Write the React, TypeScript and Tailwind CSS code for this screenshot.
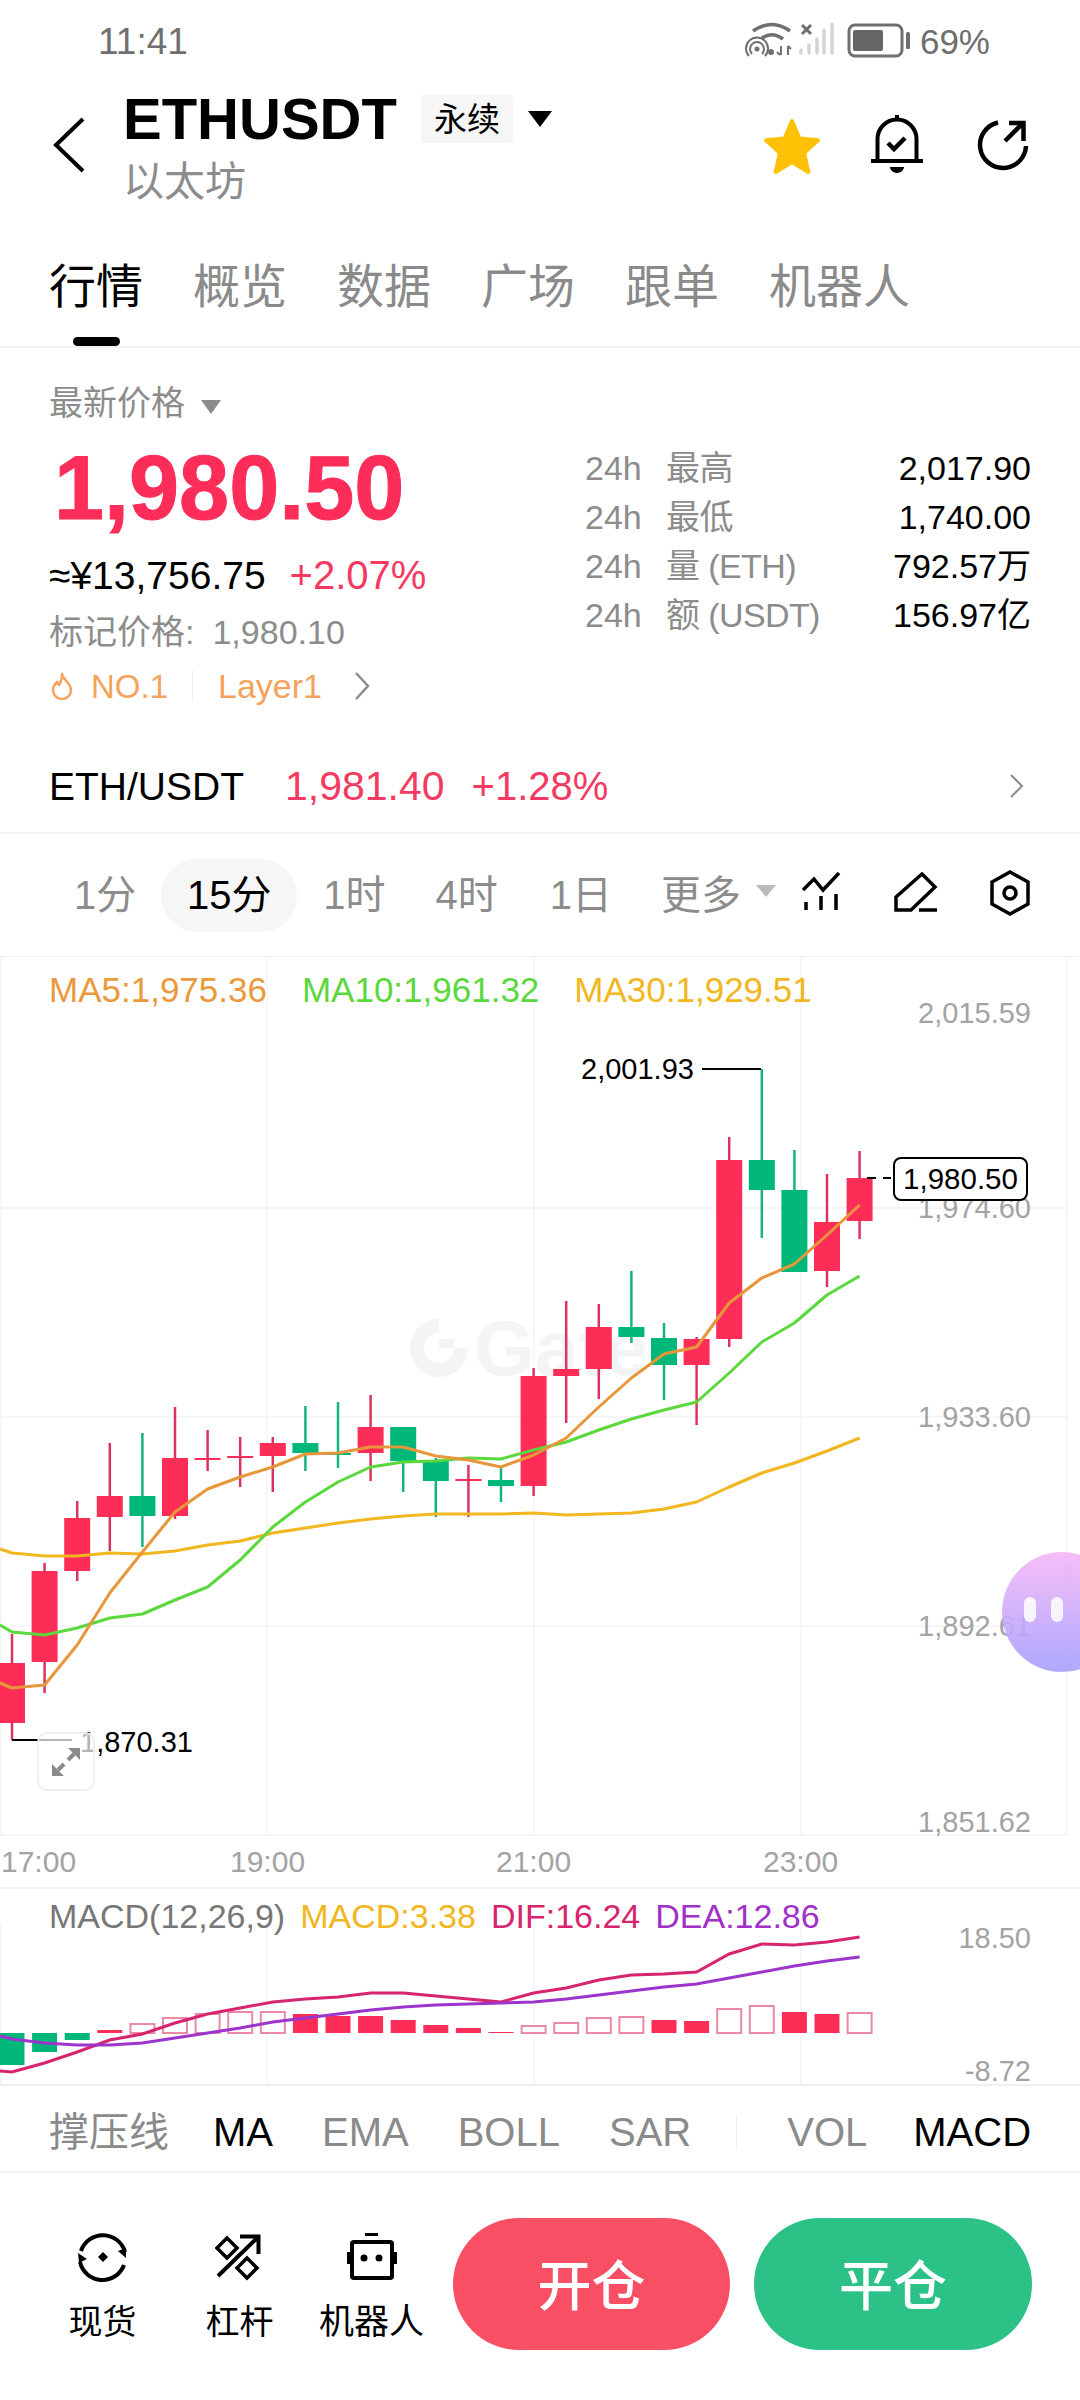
const candles: [number, number, number, number, "r" | "g"][] = [
  [1634, 1663, 1723, 1740, "r"],
  [1563, 1571, 1662, 1693, "r"],
  [1501, 1518, 1571, 1581, "r"],
  [1443, 1496, 1517, 1551, "r"],
  [1433, 1496, 1516, 1547, "g"],
  [1407, 1458, 1516, 1519, "r"],
  [1430, 1458, 1460, 1471, "r"],
  [1437, 1456, 1458, 1487, "r"],
  [1437, 1443, 1456, 1492, "r"],
  [1406, 1443, 1453, 1471, "g"],
  [1402, 1453, 1455, 1468, "g"],
  [1395, 1427, 1453, 1481, "r"],
  [1427, 1427, 1461, 1492, "g"],
  [1458, 1461, 1481, 1517, "g"],
  [1465, 1479, 1481, 1517, "r"],
  [1468, 1480, 1486, 1502, "g"],
  [1368, 1376, 1486, 1496, "r"],
  [1301, 1369, 1376, 1423, "r"],
  [1304, 1327, 1369, 1399, "r"],
  [1271, 1327, 1337, 1343, "g"],
  [1323, 1338, 1365, 1400, "g"],
  [1337, 1339, 1365, 1425, "r"],
  [1137, 1160, 1339, 1347, "r"],
  [1069, 1160, 1190, 1238, "g"],
  [1150, 1190, 1272, 1272, "g"],
  [1174, 1222, 1271, 1287, "r"],
  [1151, 1178, 1221, 1239, "r"],
];

const ma5 = [1688, 1685, 1645, 1593, 1552, 1512, 1489, 1477, 1467, 1454, 1453, 1447, 1447, 1456, 1460, 1467, 1455, 1438, 1407, 1378, 1354, 1347, 1303, 1278, 1264, 1235, 1205];
const ma10 = [1632, 1635, 1628, 1618, 1614, 1600, 1587, 1560, 1527, 1502, 1482, 1467, 1462, 1461, 1458, 1459, 1450, 1442, 1430, 1419, 1410, 1402, 1373, 1342, 1323, 1295, 1276];
const ma30 = [1553, 1556, 1556, 1553, 1554, 1551, 1545, 1541, 1533, 1528, 1523, 1519, 1516, 1514, 1514, 1514, 1513, 1515, 1514, 1513, 1509, 1502, 1487, 1473, 1463, 1451, 1438];

// tops in page pixels, bottom is the zero line
const macdBars: [number, "g" | "f" | "h"][] = [
  [2065, "g"], [2052, "g"], [2040, "g"], [2030, "f"], [2024, "h"], [2018, "h"], [2014, "h"], [2012, "h"], [2012, "h"],
  [2014, "f"], [2016, "f"], [2016, "f"], [2020, "f"], [2025, "f"], [2028, "f"], [2032, "f"], [2026, "h"], [2023, "h"],
  [2018, "h"], [2017, "h"], [2020, "f"], [2021, "f"], [2009, "h"], [2006, "h"], [2012, "f"], [2014, "f"], [2013, "h"],
];
const dif = [2072, 2063, 2052, 2040, 2034, 2023, 2014, 2008, 2002, 1999, 1997, 1993, 1993, 1996, 1999, 2002, 1993, 1988, 1980, 1975, 1974, 1972, 1954, 1944, 1945, 1942, 1937];
const dea = [2039, 2043, 2045, 2045, 2043, 2038, 2033, 2028, 2022, 2018, 2014, 2010, 2007, 2005, 2004, 2003, 2002, 1999, 1995, 1991, 1987, 1984, 1978, 1972, 1966, 1961, 1957];

const cx = (i: number) => 12 + 32.6 * i;
const toPoints = (ys: number[]) => ys.map((y, i) => `${cx(i)},${y}`).join(" ");

const tabs = ["概览", "数据", "广场", "跟单", "机器人"];
const stats = [
  { label: "最高", value: "2,017.90" },
  { label: "最低", value: "1,740.00" },
  { label: "量 (ETH)", value: "792.57万" },
  { label: "额 (USDT)", value: "156.97亿" },
];

function StatusBar() {
  return (
    <div className="flex h-[82px] items-center pl-[98px] pr-[90px] text-[#6f6f6f]">
      <span className="text-[37px] leading-none">11:41</span>
      <svg width="180" height="50" viewBox="0 0 180 50" className="ml-auto" fill="none">
        <path d="M14 15Q33 2 51 15" stroke="#6f6f6f" strokeWidth="3.5" />
        <path d="M23 22Q33 15 44 23" stroke="#6f6f6f" strokeWidth="3.5" />
        <circle cx="18" cy="33" r="2.5" fill="#6f6f6f" />
        <path d="M13 38a7 7 0 1 1 10 0M10 40a11 11 0 1 1 16 0" stroke="#6f6f6f" strokeWidth="2" />
        <circle cx="32" cy="36" r="3" fill="#6f6f6f" />
        <path d="M42 30v9M38 36l3 3M49 39v-9M52 33l-3-3" stroke="#6f6f6f" strokeWidth="2" />
        <path d="M63 9l9 9M72 9l-9 9" stroke="#6f6f6f" strokeWidth="3" />
        <path d="M62 37v-3M70 37v-8M78 37v-14M85 37v-23M93 37v-29" stroke="#d5d5d5" strokeWidth="3.5" strokeLinecap="round" />
        <rect x="110" y="9" width="53" height="31" rx="6" stroke="#6f6f6f" strokeWidth="3" />
        <rect x="114" y="14" width="30" height="21" rx="2" fill="#666666" />
        <rect x="167" y="16" width="4" height="17" rx="1.5" fill="#6f6f6f" />
      </svg>
      <span className="ml-px text-[35px] leading-none">69%</span>
    </div>
  );
}

function Header() {
  return (
    <div className="flex h-[148px] pl-[53px] pr-[50px]">
      <svg width="32" height="56" viewBox="0 0 32 56" className="mt-[35px]" fill="none">
        <path d="M30 2L3 28l27 26" stroke="#000" strokeWidth="4" />
      </svg>
      <div className="ml-[38px] flex flex-col">
        <div className="mt-[13px] flex h-[48px] items-center">
          <span className="text-[58px] font-bold leading-none text-black">ETHUSDT</span>
          <span className="ml-[24px] flex h-[48px] w-[92px] items-center justify-center rounded-[4px] bg-[#f6f6f6] text-[33px] leading-none text-black">
            永续
          </span>
          <svg width="24" height="16" viewBox="0 0 24 16" className="ml-[15px]">
            <path d="M0 0h24L12 16z" fill="#000" />
          </svg>
        </div>
        <span className="mt-[17px] text-[41px] leading-[44px] text-[#8c8c8c]">以太坊</span>
      </div>
      <div className="ml-auto flex items-start">
        <svg width="60" height="58" viewBox="0 0 60 58" className="mt-[35px]">
          <path
            d="M30 4l7.5 17.5 18.5 1.8-14 12.7 4.3 19L30 45l-16.300 10 4.300-19L4 23.300l18.500-1.800z"
            fill="#fdc106"
            stroke="#fdc106"
            strokeWidth="4"
            strokeLinejoin="round"
          />
        </svg>
        <svg width="54" height="58" viewBox="0 0 54 58" className="ml-[48px] mt-[33px]" fill="none" stroke="#000" strokeWidth="4">
          <path d="M1 46h52M7.500 46V24a19.500 19.500 0 0 1 39 0v22M27 0v5" />
          <path d="M18 28l6 6 11-11" strokeWidth="4.500" />
          <path d="M20 52h14a7 6 0 0 1-14 0z" fill="#000" stroke="none" />
        </svg>
        <svg width="54" height="54" viewBox="0 0 54 54" className="ml-[52px] mt-[37px]" fill="none" stroke="#000" strokeWidth="4.500">
          <path d="M22 3.500A23 23 0 1 0 50 27" />
          <path d="M29 22L47 4M33 4h14.500v18" />
        </svg>
      </div>
    </div>
  );
}

function Tabs() {
  return (
    <div className="flex h-[118px] gap-[50px] border-b-2 border-[#f3f3f3] pl-[49px] pt-[33px] text-[47px] leading-[47px] text-[#8a8a8a]">
      <div className="flex flex-col items-center text-black">
        行情
        <span className="mt-[27px] h-[10px] w-[47px] rounded-full bg-black" />
      </div>
      {tabs.map((t) => (
        <span key={t}>{t}</span>
      ))}
    </div>
  );
}

function PriceBlock() {
  return (
    <div className="flex h-[396px] pl-[49px] pr-[49px]">
      <div className="flex flex-col">
        <div className="mt-[37px] flex h-[36px] items-center text-[34px] leading-none text-[#8c8c8c]">
          最新价格
          <svg width="20" height="14" viewBox="0 0 20 14" className="ml-[16px] mt-[8px]">
            <path d="M0 0h20L10 14z" fill="#8c8c8c" />
          </svg>
        </div>
        <span className="ml-[5px] mt-[22px] text-[90px] font-bold leading-[90px] text-[#fc2d58] [-webkit-text-stroke:1px_#fc2d58]">1,980.50</span>
        <div className="mt-[22px] flex h-[40px] items-center text-[39px] leading-none">
          <span className="text-black">≈¥13,756.75</span>
          <span className="ml-[24px] text-[40px] text-[#f43a62]">+2.07%</span>
        </div>
        <div className="mt-[20px] flex h-[34px] items-center text-[34px] leading-none text-[#8c8c8c]">
          标记价格: <span className="ml-[18px]">1,980.10</span>
        </div>
        <div className="mt-[19px] flex h-[36px] items-center text-[34px] leading-none text-[#f5a35c]">
          <svg width="24" height="28" viewBox="0 0 24 28" fill="none" className="ml-[1px]">
            <path d="M12 2c1 6 9 9 9 16a9 9 0 0 1-18 0c0-4 2-6 4-8l2 3c2-3 3-7 3-11z" stroke="#f5a35c" strokeWidth="2.500" strokeLinejoin="round" />
          </svg>
          <span className="ml-[17px] text-[33px]">NO.1</span>
          <span className="ml-[24px] h-[32px] w-px bg-[#eeeeee]" />
          <span className="ml-[25px]">Layer1</span>
          <svg width="16" height="28" viewBox="0 0 16 28" fill="none" className="ml-[32px]">
            <path d="M2 1l12 13L2 27" stroke="#8c8c8c" strokeWidth="2.500" />
          </svg>
        </div>
      </div>
      <div className="ml-auto mt-[102px] flex w-[446px] flex-col gap-[13px] text-[34px] leading-[36px]">
        {stats.map((s) => (
          <div key={s.label} className="flex items-center">
            <span className="w-[81px] text-[#8c8c8c]">24h</span>
            <span className="tracking-[-0.6px] text-[#8c8c8c]">{s.label}</span>
            <span className="ml-auto text-black">{s.value}</span>
          </div>
        ))}
      </div>
    </div>
  );
}

function SpotRow() {
  return (
    <div className="flex h-[90px] items-center border-b-2 border-[#f3f3f3] pb-[4px] pl-[49px] pr-[56px] text-[39px] leading-none">
      <span className="text-black">ETH/USDT</span>
      <span className="ml-[41px] text-[41px] text-[#f43a62]">1,981.40</span>
      <span className="ml-[27px] text-[40px] text-[#f43a62]">+1.28%</span>
      <svg width="14" height="24" viewBox="0 0 14 24" fill="none" className="ml-auto">
        <path d="M1 1l11 11L1 23" stroke="#8c8c8c" strokeWidth="2" />
      </svg>
    </div>
  );
}

function IntervalRow() {
  return (
    <div className="flex h-[122px] items-center whitespace-nowrap pl-[74px] text-[40px] leading-none text-[#8c8c8c]">
      <span>1分</span>
      <span className="ml-[25px] flex h-[73px] w-[136px] items-center justify-center rounded-full bg-[#f6f6f6] text-black">15分</span>
      <span className="ml-[26px]">1时</span>
      <span className="ml-[50px]">4时</span>
      <span className="ml-[52px]">1日</span>
      <span className="ml-[49px]">更多</span>
      <svg width="20" height="12" viewBox="0 0 20 12" className="ml-[15px] mb-[8px]">
        <path d="M0 0h20L10 12z" fill="#bbbbbb" />
      </svg>
      <svg width="40" height="40" viewBox="0 0 40 40" className="ml-[25px] mb-[6px]" fill="none" stroke="#000" strokeWidth="3.500">
        <path d="M2 18l11-11 9 11L38 1" />
        <path d="M5 30v8M20 24v14M35 22v16" />
      </svg>
      <svg width="44" height="40" viewBox="0 0 44 40" className="ml-[53px] mb-[6px]" fill="none" stroke="#000" strokeWidth="3.500">
        <path d="M2 25L28 2l13 13-24 23H2zM25 38h18" />
      </svg>
      <svg width="42" height="46" viewBox="0 0 42 46" className="ml-[51px] mb-[4px]" fill="none" stroke="#000" strokeWidth="3.500">
        <path d="M21 2l18 10v22L21 44 3 34V12z" />
        <circle cx="21" cy="23" r="6" />
      </svg>
    </div>
  );
}

function Chart() {
  return (
    <div className="relative h-[880px] border-t border-[#f3f3f3]">
      {/* watermark sits under the candles */}
      <div className="absolute left-[410px] top-[362px] flex items-center text-[#f3f4f5]">
        <svg width="58" height="58" viewBox="0 0 58 58">
          <path d="M29 0v14a15 15 0 1 0 15 15h14A29 29 0 1 1 29 0z" fill="#f3f4f5" />
          <path d="M29 20h15v9H29z" fill="#f3f4f5" />
        </svg>
        <span className="ml-[6px] text-[78px] font-bold leading-[58px]">Gate</span>
      </div>

      <svg width="1080" height="879" viewBox="0 957 1080 879" className="absolute left-0 top-0">
        <g stroke="#f3f4f6" strokeWidth="1.500">
          <path d="M0 1208H1067M0 1417H1067M0 1626H1067M0 1835H1067" />
          <path d="M1 956V1836M267 956V1836M534 956V1836M801 956V1836M1067 956V1836" />
        </g>
        {candles.map(([hi, top, bottom, lo, kind], i) => (
          <g key={i}>
            <line x1={cx(i)} x2={cx(i)} y1={hi} y2={lo} stroke={kind === "r" ? "#d8345e" : "#14b47f"} strokeWidth="2.500" />
            <rect x={cx(i) - 13} y={top} width="26" height={bottom - top} fill={kind === "r" ? "#fd2d58" : "#00b77a"} />
          </g>
        ))}
        <g fill="none" strokeWidth="3" strokeLinejoin="round">
          <polyline points={`0,1549 ${toPoints(ma30)}`} stroke="#f2b61e" />
          <polyline points={`0,1625 ${toPoints(ma10)}`} stroke="#5ad83c" />
          <polyline points={`0,1683 ${toPoints(ma5)}`} stroke="#e8963a" />
        </g>
        <path d="M702 1069H761" stroke="#000" strokeWidth="2" fill="none" />
        <path d="M12 1740H72" stroke="#000" strokeWidth="2" fill="none" />
        <path d="M867 1178H891" stroke="#000" strokeWidth="2" strokeDasharray="9 7" fill="none" />
      </svg>

      <div className="relative flex gap-[35px] pl-[49px] pt-[15px] text-[35px] leading-[36px]">
        <span className="text-[#ea9a3c]">MA5:1,975.36</span>
        <span className="text-[#5ad83c]">MA10:1,961.32</span>
        <span className="text-[#f2b61e]">MA30:1,929.51</span>
      </div>

      <span className="absolute right-[49px] top-[41px] text-[29px] leading-[30px] text-[#a3a3a3]">2,015.59</span>
      <span className="absolute right-[49px] top-[236px] text-[29px] leading-[30px] text-[#a3a3a3]">1,974.60</span>
      <span className="absolute right-[49px] top-[445px] text-[29px] leading-[30px] text-[#a3a3a3]">1,933.60</span>
      <span className="absolute right-[49px] top-[654px] text-[29px] leading-[30px] text-[#a3a3a3]">1,892.61</span>
      <span className="absolute right-[49px] top-[850px] text-[29px] leading-[30px] text-[#a3a3a3]">1,851.62</span>

      <span className="absolute left-[581px] top-[97px] text-[29px] leading-[30px] text-black">2,001.93</span>
      <span className="absolute left-[80px] top-[770px] text-[29px] leading-[30px] text-black">1,870.31</span>

      <span className="absolute left-[893px] top-[200px] flex h-[44px] w-[135px] items-center justify-center rounded-[8px] border-2 border-black bg-white text-[29.5px] leading-none text-black">
        1,980.50
      </span>

      <div className="absolute left-[37px] top-[775px] flex h-[59px] w-[58px] items-center justify-center rounded-[10px] border-2 border-[#eeeeee] bg-white/70">
        <svg width="28" height="28" viewBox="0 0 28 28" fill="none">
          <path d="M16 0h12v12zM0 16v12h12z" fill="#8a8a8a" />
          <path d="M22 6l-6 6M6 22l6-6" stroke="#8a8a8a" strokeWidth="4" />
        </svg>
      </div>

      <div className="absolute left-[1002px] top-[595px] h-[120px] w-[120px] rounded-full bg-gradient-to-b from-[#f6b6f8] to-[#a6a0fd] opacity-90">
        <span className="absolute left-[22px] top-[45px] h-[25px] w-[12px] rounded-full bg-white/85" />
        <span className="absolute left-[49px] top-[45px] h-[25px] w-[12px] rounded-full bg-white/85" />
      </div>
    </div>
  );
}

function TimeAxis() {
  return (
    <div className="flex h-[51px] items-center pl-px text-[30px] leading-none text-[#a3a3a3]">
      <span className="w-[229px]">17:00</span>
      <span className="w-[266px]">19:00</span>
      <span className="w-[267px]">21:00</span>
      <span>23:00</span>
    </div>
  );
}

function MacdPanel() {
  return (
    <div className="relative h-[199px] border-t-2 border-[#f3f3f3]">
      <svg width="1080" height="197" viewBox="0 1889 1080 197" className="absolute left-0 top-0">
        <path d="M1 1923V2084M267 1923V2084M534 1923V2084M801 1923V2084" stroke="#f3f4f6" strokeWidth="1.500" />
        <path d="M0 2085H1080" stroke="#f0f0f0" strokeWidth="2" />
        {macdBars.map(([top, kind], i) =>
          kind === "h" ? (
            <rect key={i} x={cx(i) - 12} y={top} width="24" height={2033 - top} fill="#fff" stroke="#ea8ba3" strokeWidth="2" />
          ) : (
            <rect
              key={i}
              x={cx(i) - 12.500}
              y={kind === "g" ? 2033 : top}
              width="25"
              height={kind === "g" ? top - 2033 : 2033 - top}
              fill={kind === "g" ? "#00b77a" : "#fd2d58"}
            />
          ),
        )}
        <polyline points={`0,2071 ${toPoints(dif)}`} fill="none" stroke="#d6246f" strokeWidth="3" />
        <polyline points={`0,2036 ${toPoints(dea)}`} fill="none" stroke="#9d34cb" strokeWidth="3" />
      </svg>
      <div className="relative flex gap-[15px] pl-[49px] pt-[9px] text-[34px] leading-[36px]">
        <span className="text-[#777777]">MACD(12,26,9)</span>
        <span className="text-[#f2b61e]">MACD:3.38</span>
        <span className="text-[#d6246f]">DIF:16.24</span>
        <span className="text-[#a030c8]">DEA:12.86</span>
      </div>
      <span className="absolute right-[49px] top-[34px] text-[29px] leading-[30px] text-[#a3a3a3]">18.50</span>
      <span className="absolute right-[49px] top-[167px] text-[29px] leading-[30px] text-[#a3a3a3]">-8.72</span>
    </div>
  );
}

function IndicatorRow() {
  return (
    <div className="flex h-[87px] items-center whitespace-nowrap border-b-2 border-[#f3f3f3] pl-[49px] pt-[7px] text-[40px] leading-none text-[#8a8a8a]">
      <span>撑压线</span>
      <span className="ml-[44px] text-black">MA</span>
      <span className="ml-[49px]">EMA</span>
      <span className="ml-[49px]">BOLL</span>
      <span className="ml-[49px]">SAR</span>
      <span className="ml-[45px] h-[35px] w-px bg-[#eeeeee]" />
      <span className="ml-[50px]">VOL</span>
      <span className="ml-[46px] text-black">MACD</span>
    </div>
  );
}

function BottomBar() {
  return (
    <div className="flex pl-[65px] pr-[48px] pt-[45px]">
      <div className="flex w-[75px] flex-col items-center">
        <svg width="60" height="60" viewBox="0 0 60 60" className="mt-[9px]" fill="none" stroke="#000" strokeWidth="4">
          <path d="M8 24A23 23 0 0 1 52 25" />
          <path d="M7 35A23 23 0 0 0 51 38" />
          <path d="M45 24l8 7v-10zM5 26l9 6-8 4z" fill="#000" stroke="none" />
          <path d="M30 25l5 5-5 5-5-5z" fill="#000" stroke="none" />
        </svg>
        <span className="mt-[15px] text-[34px] leading-[40px] text-black">现货</span>
      </div>
      <div className="ml-[62px] flex w-[75px] flex-col items-center">
        <svg width="50" height="50" viewBox="0 0 50 50" className="mt-[14px]" fill="none" stroke="#000" strokeWidth="4">
          <path d="M3 44L43 5M25 4.500h18.500V22" />
          <path d="M12 6l10 10-10 10L2 16zM32 26l10 10-10 10-10-10z" strokeWidth="3.500" />
        </svg>
        <span className="mt-[20px] text-[34px] leading-[40px] text-black">杠杆</span>
      </div>
      <div className="ml-[42px] flex w-[105px] flex-col items-center">
        <svg width="54" height="50" viewBox="0 0 54 50" className="mt-[13px]">
          <path d="M20 2h13v3H20z" fill="#000" />
          <rect x="7" y="11" width="40" height="36" rx="2" fill="none" stroke="#000" strokeWidth="4" />
          <path d="M2 21h3v12H2zM49 21h3v12h-3z" fill="#000" />
          <circle cx="19" cy="27" r="3.500" fill="#000" />
          <circle cx="34" cy="27" r="3.500" fill="#000" />
        </svg>
        <span className="mt-[21px] text-[35px] leading-[40px] text-black">机器人</span>
      </div>
      <div className="ml-[29px] flex h-[132px] w-[277px] items-center justify-center rounded-full bg-[#f84f65] pt-[6px] text-[54px] font-medium leading-none text-white">
        开仓
      </div>
      <div className="ml-[24px] flex h-[132px] w-[278px] items-center justify-center rounded-full bg-[#2cc186] pt-[6px] text-[54px] font-medium leading-none text-white">
        平仓
      </div>
    </div>
  );
}

export default function App() {
  return (
    <main className="h-[2400px] w-[1080px] overflow-hidden bg-white font-['Liberation_Sans','Noto_Sans_CJK_SC',sans-serif]">
      <StatusBar />
      <Header />
      <Tabs />
      <PriceBlock />
      <SpotRow />
      <IntervalRow />
      <Chart />
      <TimeAxis />
      <MacdPanel />
      <IndicatorRow />
      <BottomBar />
    </main>
  );
}
